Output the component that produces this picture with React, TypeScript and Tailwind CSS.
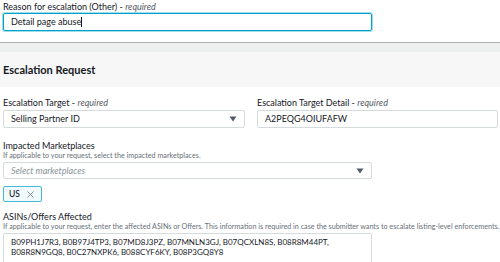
import { X } from "lucide-react";

function Label({ text, required }: { text: string; required?: boolean }) {
  return (
    <div className="text-[9px] leading-[11px] text-[#16191f]">
      {text}
      {required && (
        <>
          {" - "}
          <i className="text-[#545b64]">required</i>
        </>
      )}
    </div>
  );
}

function Caret() {
  return (
    <svg width="8" height="6" viewBox="0 0 8 6" className="shrink-0">
      <path d="M0.5 0.5h7L4 5.5z" fill="#545b64" />
    </svg>
  );
}

export default function App() {
  return (
    <div className="w-[500px] h-[262px] overflow-hidden bg-white font-['Lato',sans-serif] text-[#16191f]">
      {/* other reason */}
      <div className="px-[3px] pt-[1px]">
        <Label text="Reason for escalation (Other)" required />
        <div className="mt-[1px] w-[369px] h-[18px] flex items-center px-[7px] border border-[#00a1c9] rounded-[2px] shadow-[0_0_0_1px_#9fdcec] text-[9px]">
          Detail page abuse
          <span className="w-px h-[10px] bg-[#16191f]" />
        </div>
      </div>

      <div className="mt-[11px] border-t border-[#a9b2b3] h-[10px] bg-[#eef0f0]" />
      <div className="h-[35px] bg-[#f7f7f7] flex items-center pt-[2px] px-[3px] text-[11px] font-bold">
        Escalation Request
      </div>

      <div className="px-[3px] pt-[10px]">
        <div className="grid grid-cols-[242px_241px] gap-x-[12px]">
          <div>
            <Label text="Escalation Target" required />
            <div className="mt-[2px] h-[18px] flex items-center justify-between px-[7px] border border-[#d5dbdb] rounded-[2px] text-[9px]">
              Selling Partner ID
              <Caret />
            </div>
          </div>
          <div>
            <Label text="Escalation Target Detail" required />
            <div className="mt-[2px] h-[18px] flex items-center px-[7px] border border-[#d5dbdb] rounded-[2px] text-[9px]">
              A2PEQG4OIUFAFW
            </div>
          </div>
        </div>

        <div className="mt-[12px]">
          <Label text="Impacted Marketplaces" />
          <div className="text-[7.2px] leading-[9px] text-[#687078]">
            If applicable to your request, select the impacted marketplaces.
          </div>
          <div className="mt-[2px] w-[369px] h-[17px] flex items-center justify-between px-[7px] border border-[#d5dbdb] rounded-[2px] text-[9px] italic text-[#879596]">
            Select marketplaces
            <Caret />
          </div>
          <div className="mt-[6px] inline-flex items-center gap-[5px] h-[16px] px-[5px] border border-[#44b9d6] bg-[#f1faff] rounded-[2px] text-[8.5px] font-medium">
            US
            <X size={11} strokeWidth={1.4} className="text-[#545b64]" />
          </div>
        </div>

        <div className="mt-[8px]">
          <Label text="ASINs/Offers Affected" />
          <div className="text-[7.2px] leading-[9px] text-[#687078] whitespace-nowrap">
            If applicable to your request, enter the affected ASINs or Offers. This information is required in case the submitter wants to escalate listing-level enforcements.
          </div>
          <div className="mt-[2px] w-[369px] h-[40px] px-[7px] pt-[3px] border border-[#d5dbdb] rounded-[2px] text-[8px] leading-[10px]">
            B09PH1J7R3, B0B97J4TP3, B07MD8J3PZ, B07MNLN3GJ, B07QCXLN8S, B08R8M44PT,
            <br />
            B08R8N9GQ8, B0C27NXPK6, B088CYF6KY, B08P3GQ8Y8
          </div>
        </div>
      </div>
    </div>
  );
}
